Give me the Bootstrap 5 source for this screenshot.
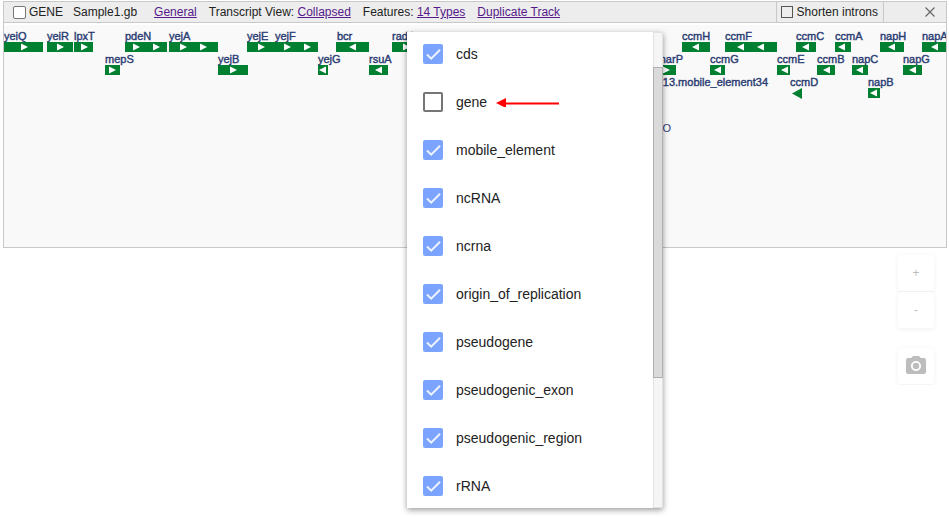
<!DOCTYPE html>
<html lang="en">
<head>
<meta charset="utf-8">
<meta name="viewport" content="width=device-width, initial-scale=1">
<title>Gene track</title>
<link href="https://cdn.jsdelivr.net/npm/bootstrap@5.3.0/dist/css/bootstrap.min.css" rel="stylesheet">
<style>
body { font-family: "Liberation Sans", Arial, sans-serif; font-size: 12px; line-height: 16px; color: #222; background: #fff; }
.page { padding: 1px 2px 0 3px; }
.track { border: 1px solid #c8c8c8; background: #f9f9f9; }
.track-bar { height: 21px; background: #ededed; border-bottom: 1px solid #c8c8c8; padding-left: 9px; }
.track-bar a { color: #551a8b; }
.track-options { gap: 12px; }
.tick { appearance: none; width: 13px; height: 13px; margin: 0; background: #fff; border: 1px solid #767676; border-radius: 2px; }
.tick-flat { width: 12px; height: 12px; background: transparent; border-radius: 0; border-color: #555; }
.name-label { margin-left: 3px; margin-right: 10px; }
.file-name { margin-right: 17px; }
.introns { border-left: 1px solid #c8c8c8; border-right: 1px solid #c8c8c8; padding: 0 5px 0 4px; gap: 4px; }
.close-cell { width: 62px; padding-right: 10px; }
.close-cell button, .tool { border: 0; background: transparent; padding: 0; }
.genome { height: 224px; width: 100%; overflow: hidden; border-top: 2px solid #fff; }
.genome text { font-size: 11px; fill: #2a3c73; stroke: #2a3c73; stroke-width: .4px; }
.genome .thin { stroke: none; }
.gene { fill: #008030; }
.tools { padding: 7px 13px 0 0; }
.tool { width: 36px; height: 36px; margin-bottom: 1px; border-radius: 3px; background: #fff; color: #bdbdbd; box-shadow: 0 1px 5px rgba(0,0,0,.07); }
.tool-camera { margin-top: 19px; }
.types-menu { left: 407px; top: 32px; width: 256px; background: #fff; box-shadow: 0 2px 6px rgba(0,0,0,.4); }
.type-list { gap: 4px; padding-left: 16px; }
.type-item { height: 44px; gap: 13px; font-size: 14px; line-height: 20px; }
.type-item label { color: #222; }
.type-box { appearance: none; width: 20px; height: 20px; margin: 0; border: 2px solid #757575; border-radius: 2px; background: #fff; flex: none; }
.type-box:checked { border: 0; background: #7ba4ff url("data:image/svg+xml,%3Csvg xmlns='http://www.w3.org/2000/svg' viewBox='0 0 20 20'%3E%3Cpath d='M4 10.5 8.2 14.7 17 5.8' fill='none' stroke='%23eef3ff' stroke-width='2'/%3E%3C/svg%3E"); }
.pointer { margin-left: -4px; }
.scroll-strip { width: 10px; background: #f5f5f5; border: 1px solid #e2e2e2; padding-top: 34px; }
.scroll-thumb { height: 311px; margin: 0 -1px; background: #dadada; border: 1px solid #b0b0b0; }
</style>
<script src="https://cdn.jsdelivr.net/npm/bootstrap@5.3.0/dist/js/bootstrap.bundle.min.js" defer></script>
</head>
<body>
<main class="page">
  <section class="track">
    <header class="track-bar d-flex align-items-center">
      <input class="tick" type="checkbox" id="gene-track"><label class="name-label" for="gene-track">GENE</label>
      <span class="file-name">Sample1.gb</span>
      <nav class="track-options d-flex flex-grow-1" aria-label="Track options">
        <a href="#general">General</a>
        <span>Transcript View: <a href="#view">Collapsed</a></span>
        <span>Features: <a href="#types">14 Types</a></span>
        <a href="#duplicate">Duplicate Track</a>
      </nav>
      <div class="introns d-flex align-items-center h-100">
        <input class="tick tick-flat" type="checkbox" id="introns"><label for="introns">Shorten introns</label>
      </div>
      <div class="close-cell d-flex justify-content-end">
        <button type="button" class="d-flex" aria-label="Close track"><svg width="12" height="12" viewBox="0 0 12 12"><path d="M1.500 1.500 10.500 10.500M10.500 1.500 1.500 10.500" stroke="#666" stroke-width="1.200"/></svg></button>
      </div>
    </header>
    <svg class="genome d-block" aria-label="Genes">
      <defs>
        <path id="f" d="M0 0 7 3.500 0 7Z" fill="#fff"/>
        <path id="b" d="M7 0 0 3.500 7 7Z" fill="#fff"/>
      </defs>
      <g transform="translate(0 -2)">
      <g class="gene">
        <path d="M0 19h39v10H0zM43 19h26v10H43zM70 19h19v10H70zM121 19h42v10h-42zM165 19h49v10h-49zM243 19h71v10h-71zM332 19h33v10h-33zM388 19h30v10h-30zM678 19h28v10h-28zM721 19h52v10h-52zM792 19h20v10h-20zM831 19h16v10h-16zM876 19h24v10h-24zM918 19h24v10h-24z"/>
        <path d="M101 42h15v10h-15zM214 42h30v10h-30zM314 42h10v10h-10zM365 42h19v10h-19zM650 42h22v10h-22zM706 42h15v10h-15zM773 42h13v10h-13zM813 42h18v10h-18zM848 42h16v10h-16zM899 42h19v10h-19z"/>
        <path d="M798 65v11l-10-5.500zM864 65h12v10h-12z"/>
      </g>
      <use href="#f" x="17" y="20.500"/><use href="#f" x="53" y="20.500"/><use href="#f" x="77" y="20.500"/>
      <use href="#f" x="129" y="20.500"/><use href="#f" x="149" y="20.500"/><use href="#f" x="176" y="20.500"/><use href="#f" x="196" y="20.500"/>
      <use href="#f" x="254" y="20.500"/><use href="#f" x="280" y="20.500"/><use href="#f" x="300" y="20.500"/><use href="#b" x="345" y="20.500"/><use href="#f" x="399" y="20.500"/>
      <use href="#b" x="688" y="20.500"/><use href="#b" x="733" y="20.500"/><use href="#b" x="753" y="20.500"/><use href="#b" x="798" y="20.500"/><use href="#b" x="834" y="20.500"/><use href="#b" x="884" y="20.500"/><use href="#b" x="927" y="20.500"/>
      <use href="#f" x="105" y="43.500"/><use href="#f" x="226" y="43.500"/><use href="#b" x="315" y="43.500"/><use href="#b" x="371" y="43.500"/><use href="#f" x="659" y="43.500"/>
      <use href="#b" x="710" y="43.500"/><use href="#b" x="777" y="43.500"/><use href="#b" x="819" y="43.500"/><use href="#b" x="852" y="43.500"/><use href="#b" x="905" y="43.500"/>
      <use href="#b" x="866" y="66.500"/>
      <g>
        <text x="0" y="17">yeiQ</text><text x="43" y="17">yeiR</text><text x="70" y="17">lpxT</text><text x="121" y="17">pdeN</text><text x="165" y="17">yejA</text><text x="243" y="17">yejE</text><text x="271" y="17">yejF</text><text x="333" y="17">bcr</text><text x="388" y="17">radA</text>
        <text x="678" y="17">ccmH</text><text x="721" y="17">ccmF</text><text x="792" y="17">ccmC</text><text x="831" y="17">ccmA</text><text x="876" y="17">napH</text><text x="918" y="17">napA</text>
        <text x="101" y="40">mepS</text><text x="214" y="40">yejB</text><text x="314" y="40">yejG</text><text x="365" y="40">rsuA</text><text x="679" y="40" text-anchor="end">narP</text><text x="706" y="40">ccmG</text><text x="773" y="40">ccmE</text><text x="813" y="40">ccmB</text><text x="848" y="40">napC</text><text x="899" y="40">napG</text>
        <text x="764" y="63" text-anchor="end">13.mobile_element34</text><text x="786" y="63">ccmD</text><text x="864" y="63">napB</text>
        <text class="thin" x="667" y="109" text-anchor="end">O</text>
      </g>
      </g>
    </svg>
  </section>

  <div class="tools d-flex flex-column align-items-end">
    <button type="button" class="tool" aria-label="Zoom in">+</button>
    <button type="button" class="tool" aria-label="Zoom out">-</button>
    <button type="button" class="tool tool-camera d-flex align-items-center justify-content-center" aria-label="Snapshot">
      <svg width="24" height="24" viewBox="0 0 24 24" fill="#bdbdbd"><circle cx="12" cy="12" r="3.200"/><path d="M9 2 7.170 4H4c-1.100 0-2 .9-2 2v12c0 1.100.9 2 2 2h16c1.100 0 2-.9 2-2V6c0-1.100-.9-2-2-2h-3.170L15 2H9zm3 15c-2.760 0-5-2.240-5-5s2.240-5 5-5 5 2.240 5 5-2.240 5-5 5z"/></svg>
    </button>
  </div>
</main>

<aside class="types-menu position-absolute d-flex" aria-label="Feature types">
  <div class="type-list d-flex flex-column flex-grow-1">
    <div class="type-item d-flex align-items-center"><input class="type-box" type="checkbox" id="t1" checked><label for="t1">cds</label></div>
    <div class="type-item d-flex align-items-center"><input class="type-box" type="checkbox" id="t2"><label for="t2">gene</label>
      <svg class="pointer" width="63" height="10" viewBox="0 0 63 10"><path d="M10 6.500H63" stroke="#f00" stroke-width="2"/><path d="M0 6 10 1V11Z" fill="#f00"/></svg></div>
    <div class="type-item d-flex align-items-center"><input class="type-box" type="checkbox" id="t3" checked><label for="t3">mobile_element</label></div>
    <div class="type-item d-flex align-items-center"><input class="type-box" type="checkbox" id="t4" checked><label for="t4">ncRNA</label></div>
    <div class="type-item d-flex align-items-center"><input class="type-box" type="checkbox" id="t5" checked><label for="t5">ncrna</label></div>
    <div class="type-item d-flex align-items-center"><input class="type-box" type="checkbox" id="t6" checked><label for="t6">origin_of_replication</label></div>
    <div class="type-item d-flex align-items-center"><input class="type-box" type="checkbox" id="t7" checked><label for="t7">pseudogene</label></div>
    <div class="type-item d-flex align-items-center"><input class="type-box" type="checkbox" id="t8" checked><label for="t8">pseudogenic_exon</label></div>
    <div class="type-item d-flex align-items-center"><input class="type-box" type="checkbox" id="t9" checked><label for="t9">pseudogenic_region</label></div>
    <div class="type-item d-flex align-items-center"><input class="type-box" type="checkbox" id="t10" checked><label for="t10">rRNA</label></div>
  </div>
  <div class="scroll-strip"><div class="scroll-thumb"></div></div>
</aside>
</body>
</html>
